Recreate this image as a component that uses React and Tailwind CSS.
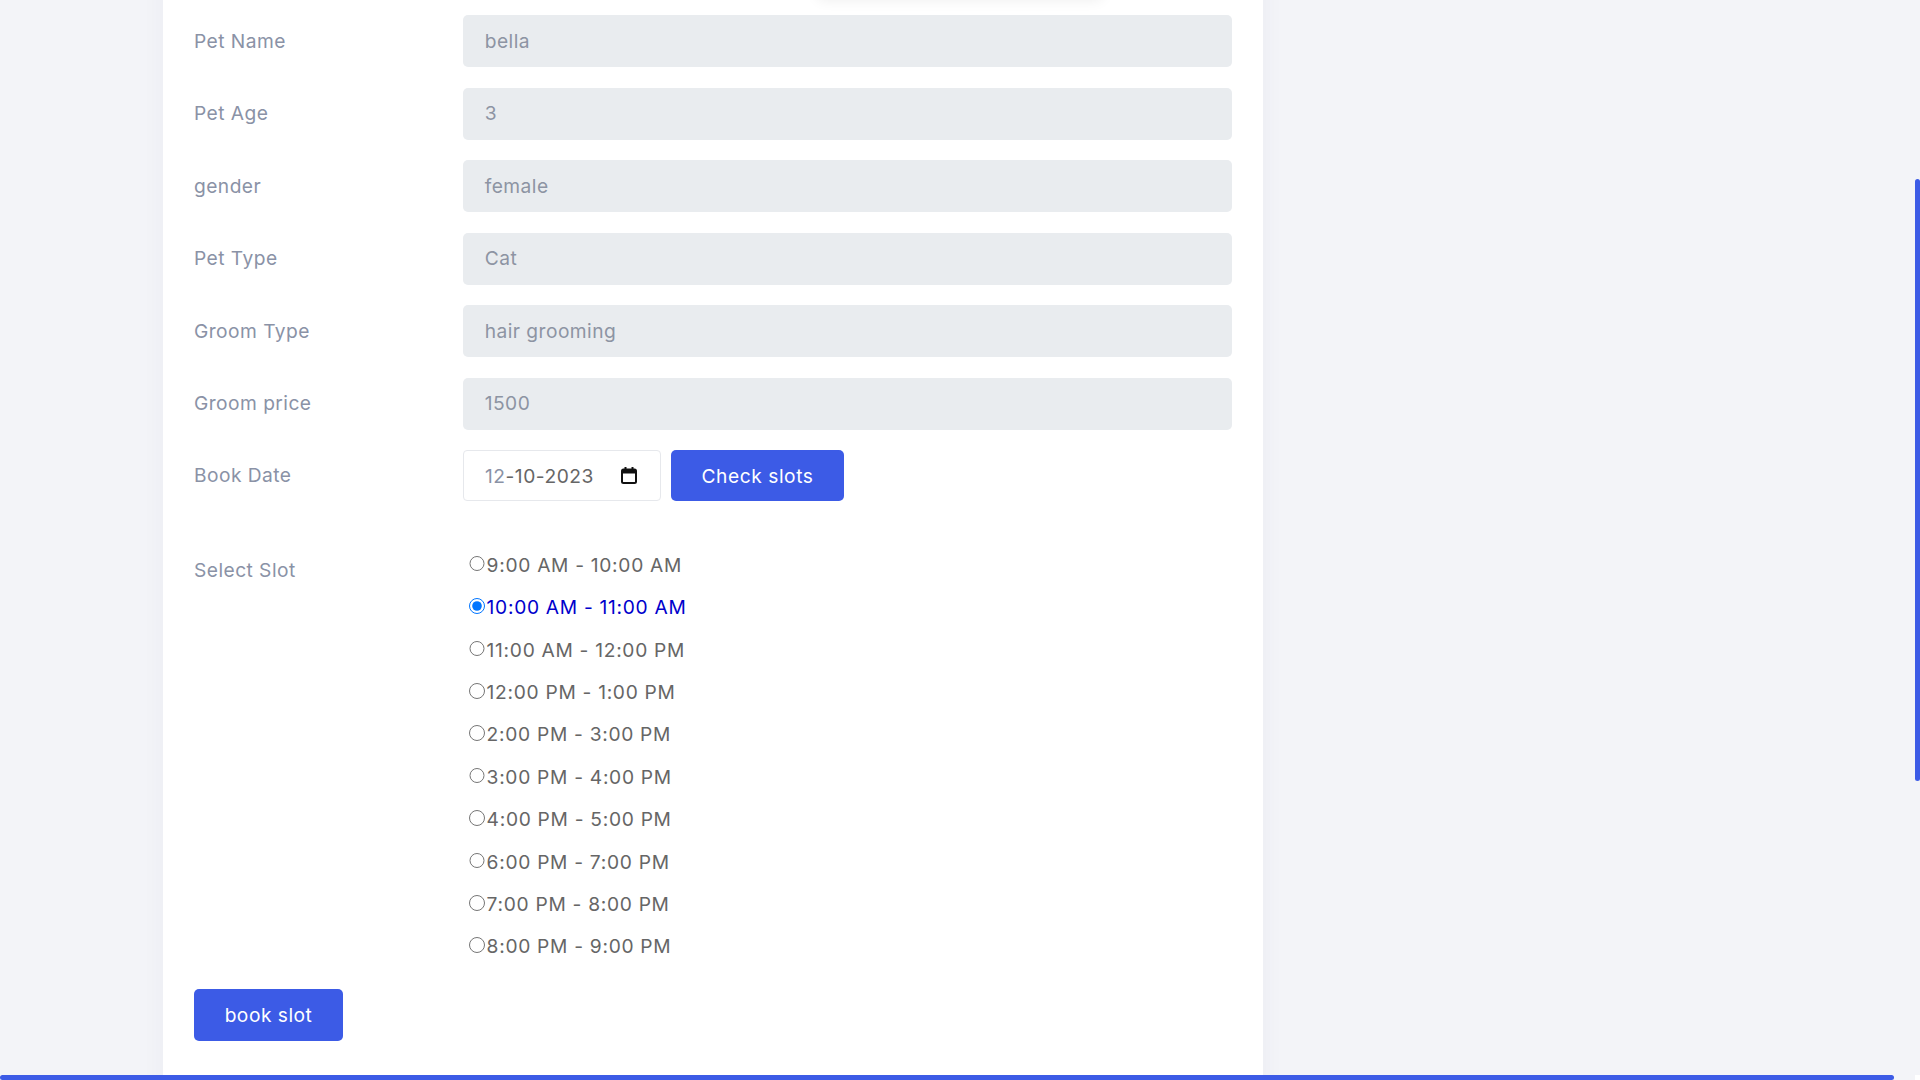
import { useLayoutEffect, useRef } from "react";

const fields = [
  { label: "Pet Name", value: "bella" },
  { label: "Pet Age", value: "3" },
  { label: "gender", value: "female" },
  { label: "Pet Type", value: "Cat" },
  { label: "Groom Type", value: "hair grooming" },
  { label: "Groom price", value: "1500" },
];

const slots = [
  "9:00 AM - 10:00 AM",
  "10:00 AM - 11:00 AM",
  "11:00 AM - 12:00 PM",
  "12:00 PM - 1:00 PM",
  "2:00 PM - 3:00 PM",
  "3:00 PM - 4:00 PM",
  "4:00 PM - 5:00 PM",
  "6:00 PM - 7:00 PM",
  "7:00 PM - 8:00 PM",
  "8:00 PM - 9:00 PM",
];

function CalendarIcon() {
  return (
    <svg width="16" height="17" viewBox="0 0 16 17">
      <path d="M4.5 0v3M11.5 0v3" stroke="#111" strokeWidth="2" />
      <rect x="1" y="2.5" width="14" height="13.5" rx="1.5" fill="none" stroke="#111" strokeWidth="2" />
      <rect x="1" y="2.5" width="14" height="4" fill="#111" />
    </svg>
  );
}

export default function App() {
  const scroller = useRef(null);

  useLayoutEffect(() => {
    if (scroller.current) {
      scroller.current.scrollTop = 320;
      scroller.current.scrollLeft = 0;
    }
  }, []);

  return (
    <div className="relative h-screen w-screen overflow-hidden font-['Inter',sans-serif]">
      <div
        ref={scroller}
        className="h-full w-full overflow-auto bg-[#f3f4f8] [scrollbar-width:none]"
      >
        <div className="w-[1936px] min-h-[1920px] pt-[40px] pb-[60px]">

          {/* Card */}
          <div className="ml-[163px] w-[1100px] bg-white shadow-[0_0_24px_rgba(30,40,90,0.04)] px-[31px] pt-[156px] pb-[120px]">

            {/* Heading box (scrolled out of view) */}
            <div className="ml-[623px] w-[286px] h-[120px] rounded-md bg-white shadow-[0_4px_14px_rgba(0,0,0,0.07)]" />

            {/* Read-only fields */}
            <div className="mt-[19px]">
              {fields.map((f) => (
                <div key={f.label} className="flex items-center mb-[20.5px]">
                  <label className="w-[269px] text-[19.2px] tracking-[0.45px] text-[#8a92a6]">
                    {f.label}
                  </label>
                  <div className="w-[770px] h-[52px] rounded-[5px] bg-[#e9ecef] flex items-center px-[22px] text-[19.2px] tracking-[0.45px] text-[#8d94a3]">
                    {f.value}
                  </div>
                </div>
              ))}
            </div>

            {/* Book date */}
            <div className="flex items-center">
              <label className="w-[269px] text-[19.2px] tracking-[0.45px] text-[#8a92a6]">
                Book Date
              </label>
              <div className="w-[198px] h-[51px] rounded-[4px] border border-[#e6e8ec] bg-white flex items-center justify-between pl-[21px] pr-[23px] text-[19.2px] tracking-[0.5px]">
                <span className="mt-[2px]">
                  <span className="text-[#8a92a6]">12</span>
                  <span className="text-[#666]">-10-2023</span>
                </span>
                <CalendarIcon />
              </div>
              <button className="ml-[10px] w-[173px] h-[51px] rounded-[5px] bg-[#3c5be6] text-white text-[19.2px] tracking-[0.55px] pt-[2px]">
                Check slots
              </button>
            </div>

            {/* Slots */}
            <div className="flex mt-[43px]">
              <label className="w-[269px] pt-[12px] text-[19.2px] leading-[28px] tracking-[0.45px] text-[#8a92a6]">
                Select Slot
              </label>
              <div>
                {slots.map((s, i) => (
                  <label
                    key={s}
                    className={`flex items-center h-[42.4px] text-[19.2px] tracking-[0.7px] ${
                      i === 1 ? "text-[#0000cc]" : "text-[#666]"
                    }`}
                  >
                    <input
                      type="radio"
                      name="slot"
                      defaultChecked={i === 1}
                      className="w-[15.6px] h-[15.6px] ml-[6px] mr-[2px] mt-[-3px]"
                    />
                    {s}
                  </label>
                ))}
              </div>
            </div>

            <button className="mt-[21.5px] w-[149px] h-[52px] rounded-[5px] bg-[#3c5be6] text-white text-[19.2px] tracking-[0.5px]">
              book slot
            </button>

          </div>
        </div>
      </div>

      {/* Scrollbar thumbs drawn over the page */}
      <div className="absolute right-0 top-[179px] w-[5px] h-[602px] rounded-full bg-[#3c5be6]" />
      <div className="absolute left-0 bottom-0 w-[1894px] h-[5px] rounded-full bg-[#3c5be6]" />
      <div className="absolute right-0 bottom-0 w-[5px] h-[5px] bg-white" />
    </div>
  );
}
